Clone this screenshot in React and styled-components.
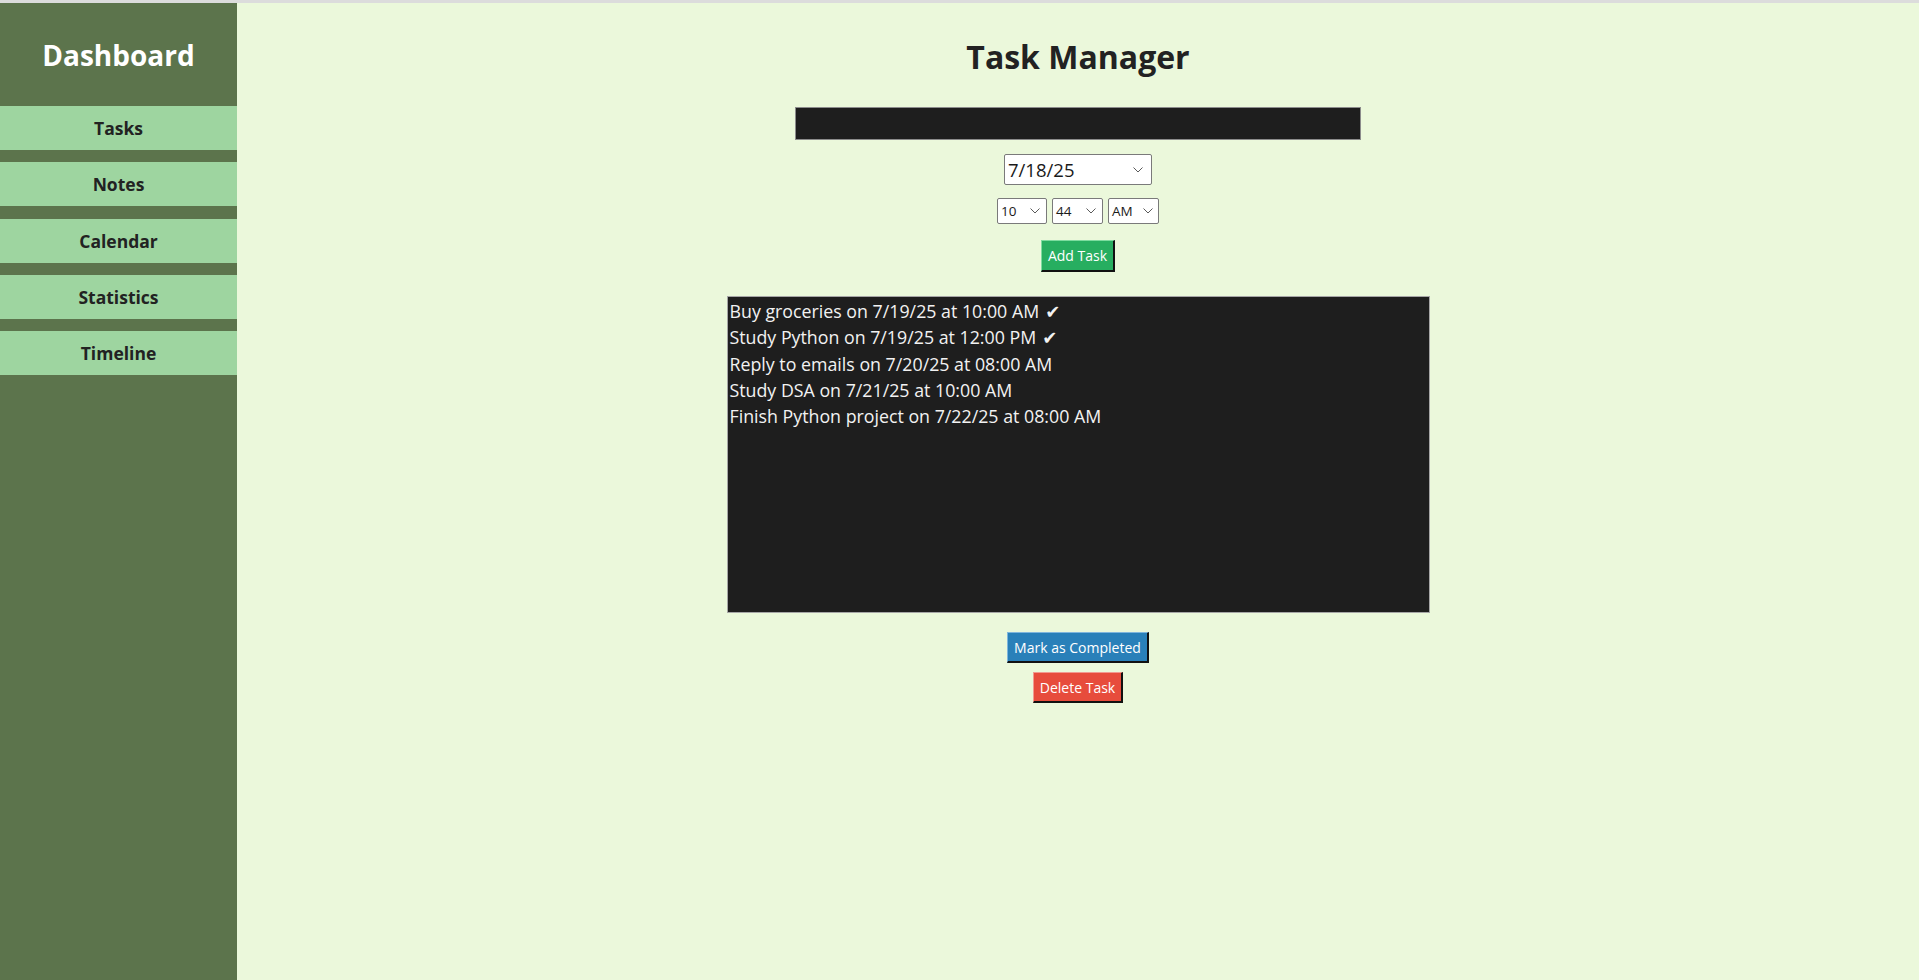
import React from "react"
import styled, { createGlobalStyle } from "styled-components"

const GlobalStyle = createGlobalStyle`
  html, body {
    margin: 0;
    padding: 0;
    background: #ebf8db;
  }
  * {
    box-sizing: border-box;
  }
`

const Shell = styled.div`
  display: flex;
  height: 100vh;
  border-top: 3px solid #dcdcdc;
  font-family: "Open Sans", "Noto Sans", sans-serif;
  overflow: hidden;
`

const Sidebar = styled.aside`
  width: 237px;
  flex-shrink: 0;
  background: #5c744c;
  display: flex;
  flex-direction: column;
`

const Brand = styled.h1`
  height: 103px;
  margin: 0;
  display: flex;
  align-items: center;
  justify-content: center;
  color: #fff;
  font-size: 28px;
  font-weight: 700;
`

const Nav = styled.nav`
  display: flex;
  flex-direction: column;
  gap: 12.3px;
`

const NavButton = styled.div`
  height: 44px;
  display: flex;
  align-items: center;
  justify-content: center;
  background: #9ed5a0;
  color: #222;
  font-size: 17.5px;
  font-weight: 700;
`

const Main = styled.main`
  flex: 1;
  display: flex;
  flex-direction: column;
  align-items: center;
`

const Title = styled.h2`
  margin: 34px 0 0;
  height: 40px;
  line-height: 40px;
  font-size: 32px;
  font-weight: 700;
  color: #222;
`

const TaskEntry = styled.div`
  margin-top: 30px;
  width: 566px;
  height: 33px;
  background: #1e1e1e;
  border: 1px solid #8c8c8c;
`

const Select = styled.div`
  margin-top: ${(p) => p.$top || 0}px;
  width: ${(p) => p.$w}px;
  height: ${(p) => p.$h}px;
  background: #fff;
  border: 1px solid #7a7a7a;
  border-radius: 2px;
  display: flex;
  align-items: center;
  justify-content: space-between;
  padding: 0 ${(p) => p.$pr}px 0 3px;
  color: #1a1a1a;
  font-size: ${(p) => p.$fs}px;
`

const TimeRow = styled.div`
  margin-top: 13px;
  display: flex;
  gap: 5px;
`

const ActionButton = styled.div`
  margin-top: ${(p) => p.$top}px;
  height: ${(p) => p.$h || 31}px;
  padding: 0 ${(p) => p.$px || 6}px;
  display: flex;
  align-items: center;
  justify-content: center;
  background: ${(p) => p.$bg};
  color: #fff;
  font-size: 14px;
  border-style: solid;
  border-width: 1px 2px 2px 1px;
  border-color: ${(p) => p.$light} #111 #111 ${(p) => p.$light};
`

const TaskList = styled.ul`
  margin: 24px 0 0;
  width: 703px;
  height: 317px;
  padding: 1px 2px 0;
  list-style: none;
  background: #1e1e1e;
  border: 1px solid #a6a6a6;
  color: #f2f2f2;
  font-size: 17.8px;
`

const TaskItem = styled.li`
  height: 26.3px;
  line-height: 26.3px;
  white-space: nowrap;
`

const Check = styled.span`
  font-family: "DejaVu Sans", sans-serif;
  font-size: 18px;
  margin-left: 6px;
`

function Chevron() {
  return (
    <svg width="10" height="6" viewBox="0 0 10 6">
      <polyline points="0.5,0.5 5,5 9.5,0.5" fill="none" stroke="#5a5a5a" strokeWidth="1" />
    </svg>
  )
}

const tasks = [
  { text: "Buy groceries on 7/19/25 at 10:00 AM", done: true },
  { text: "Study Python on 7/19/25 at 12:00 PM", done: true },
  { text: "Reply to emails on 7/20/25 at 08:00 AM", done: false },
  { text: "Study DSA on 7/21/25 at 10:00 AM", done: false },
  { text: "Finish Python project on 7/22/25 at 08:00 AM", done: false },
]

const navItems = ["Tasks", "Notes", "Calendar", "Statistics", "Timeline"]

export default function App() {
  return (
    <>
      <GlobalStyle />
      <Shell>
        <Sidebar>
          <Brand>Dashboard</Brand>
          <Nav>
            {navItems.map((n) => (
              <NavButton key={n}>{n}</NavButton>
            ))}
          </Nav>
        </Sidebar>
        <Main>
          <Title>Task Manager</Title>
          <TaskEntry />
          <Select $top={14} $w={148} $h={31} $pr={8} $fs={18.5}>
            <span>7/18/25</span>
            <Chevron />
          </Select>
          <TimeRow>
            <Select $w={50} $h={26} $pr={6} $fs={13.5}>
              <span>10</span>
              <Chevron />
            </Select>
            <Select $w={51} $h={26} $pr={6} $fs={13.5}>
              <span>44</span>
              <Chevron />
            </Select>
            <Select $w={51} $h={26} $pr={5} $fs={13.5}>
              <span>AM</span>
              <Chevron />
            </Select>
          </TimeRow>
          <ActionButton $top={16} $h={32} $bg="#27ae60" $light="#7ddc9f">
            Add Task
          </ActionButton>
          <TaskList>
            {tasks.map((t) => (
              <TaskItem key={t.text}>
                {t.text}
                {t.done && <Check>✔</Check>}
              </TaskItem>
            ))}
          </TaskList>
          <ActionButton $top={19} $bg="#2980b9" $light="#7fb6dd">
            Mark as Completed
          </ActionButton>
          <ActionButton $top={9} $bg="#e74c3c" $light="#f29a90">
            Delete Task
          </ActionButton>
        </Main>
      </Shell>
    </>
  )
}
